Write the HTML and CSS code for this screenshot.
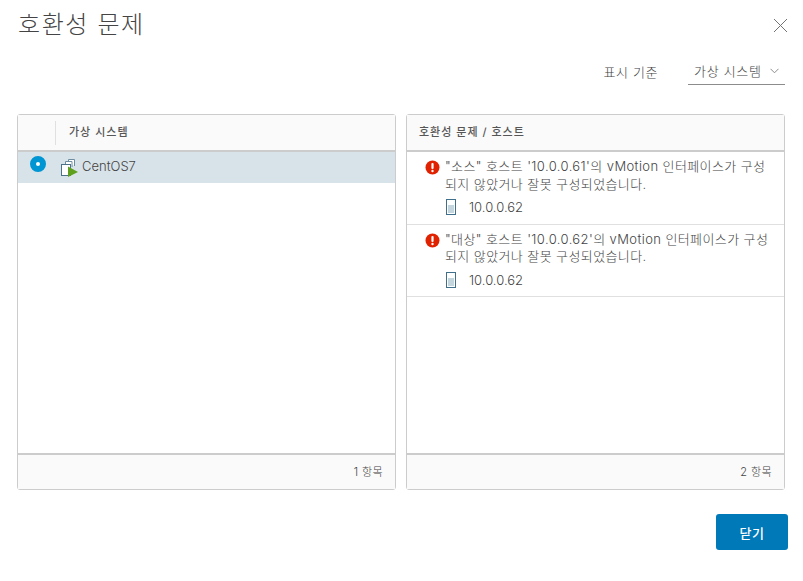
FILE: index.html
```html
<!DOCTYPE html>
<html lang="ko">
<head>
    <meta charset="UTF-8">
    <title>호환성 문제</title>
    <link rel="stylesheet" href="styles.css">
</head>
<body>
    <div class="modal">
        <div class="modal-header">
            <h1>호환성 문제</h1>
            <button class="close-button" aria-label="닫기">
                <svg width="15" height="15" viewBox="0 0 15 15"><path d="M1 1 L14 14 M14 1 L1 14" stroke="#737373" stroke-width="1" fill="none"/></svg>
            </button>
        </div>
        <div class="view-by">
            <span class="view-label">표시 기준</span>
            <div class="view-select">
                <span>가상 시스템</span>
                <svg width="9" height="6" viewBox="0 0 9 6"><path d="M0.5 0.8 L4.5 4.8 L8.5 0.8" stroke="#8c8c8c" stroke-width="1" fill="none"/></svg>
            </div>
        </div>
        <div class="panels">
            <div class="panel">
                <div class="panel-head">
                    <div class="radio-col"></div>
                    <div class="head-title with-divider">가상 시스템</div>
                </div>
                <div class="panel-body">
                    <div class="vm-row">
                        <span class="radio"></span>
                        <svg class="vm-icon" width="18" height="18" viewBox="0 0 18 18">
                            <path d="M7.5 3.5 V0.5 H13.5 V7" stroke="#6f8da0" fill="#fff"/>
                            <path d="M4.5 5.5 V2.5 H11 V8" stroke="#6f8da0" fill="#fff"/>
                            <rect x="0.5" y="5.5" width="9" height="11" fill="#fff" stroke="#4d7288"/>
                            <path d="M7 7.5 L17 13 L7 18 Z" fill="#5ea01e"/>
                        </svg>
                        <span class="vm-name">CentOS7</span>
                    </div>
                </div>
                <div class="panel-foot">1 항목</div>
            </div>
            <div class="panel">
                <div class="panel-head">
                    <div class="head-title">호환성 문제 / 호스트</div>
                </div>
                <div class="panel-body">
                    <div class="issue">
                        <div class="issue-text">
                            <svg class="error-icon" width="15" height="15" viewBox="0 0 15 15"><circle cx="7.5" cy="7.5" r="7" fill="#e12200"/><rect x="6.4" y="3" width="2.2" height="6" rx="1" fill="#fff"/><circle cx="7.5" cy="11" r="1.2" fill="#fff"/></svg>
                            <p>"소스" 호스트 '10.0.0.61'의 vMotion 인터페이스가 구성되지 않았거나 잘못 구성되었습니다.</p>
                        </div>
                        <div class="host">
                            <svg width="10" height="16" viewBox="0 0 10 16"><rect x="0.5" y="0.5" width="9" height="15" fill="#fff" stroke="#3f6f8a"/><rect x="2" y="6" width="6" height="8" fill="#c5d5de"/></svg>
                            <span>10.0.0.62</span>
                        </div>
                    </div>
                    <div class="issue">
                        <div class="issue-text">
                            <svg class="error-icon" width="15" height="15" viewBox="0 0 15 15"><circle cx="7.5" cy="7.5" r="7" fill="#e12200"/><rect x="6.4" y="3" width="2.2" height="6" rx="1" fill="#fff"/><circle cx="7.5" cy="11" r="1.2" fill="#fff"/></svg>
                            <p>"대상" 호스트 '10.0.0.62'의 vMotion 인터페이스가 구성되지 않았거나 잘못 구성되었습니다.</p>
                        </div>
                        <div class="host">
                            <svg width="10" height="16" viewBox="0 0 10 16"><rect x="0.5" y="0.5" width="9" height="15" fill="#fff" stroke="#3f6f8a"/><rect x="2" y="6" width="6" height="8" fill="#c5d5de"/></svg>
                            <span>10.0.0.62</span>
                        </div>
                    </div>
                </div>
                <div class="panel-foot">2 항목</div>
            </div>
        </div>
        <div class="modal-foot">
            <button class="close-action">닫기</button>
        </div>
    </div>
</body>
</html>
```

FILE: styles.css
```css
* {
    box-sizing: border-box;
}
body {
    margin: 0;
    background-color: white;
    font-family: Inter, "Noto Sans CJK KR", sans-serif;
    color: #444;
}
.modal {
    width: 803px;
    height: 581px;
    padding: 4px 15px 0 18px;
}
.modal-header {
    display: flex;
    justify-content: space-between;
    align-items: center;
    height: 36px;
}
.modal-header h1 {
    margin: 0;
    font-size: 24px;
    font-weight: 300;
    letter-spacing: 1.6px;
    color: #444;
}
.close-button {
    border: none;
    background: none;
    padding: 0;
    margin-top: 7px;
    margin-right: 0;
    height: 15px;
}
.view-by {
    display: flex;
    justify-content: flex-end;
    align-items: center;
    gap: 30px;
    height: 28px;
    margin-top: 17px;
    margin-right: 3px;
    font-weight: 300;
}
.view-label {
    font-size: 13px;
    letter-spacing: 0.6px;
}
.view-select {
    display: flex;
    align-items: center;
    justify-content: space-between;
    width: 97px;
    height: 28px;
    padding: 0 6px;
    font-size: 13px;
    letter-spacing: 0.7px;
    border-bottom: 1px solid #8c8c8c;
}
.panels {
    display: flex;
    gap: 10px;
    margin-top: 29px;
    margin-right: 3px;
    margin-left: -1px;
}
.panel {
    flex: 1;
    height: 376px;
    display: flex;
    flex-direction: column;
    border: 1px solid #ccc;
    border-radius: 3px;
}
.panel-head {
    display: flex;
    align-items: center;
    height: 37px;
    padding-bottom: 3px;
    background: #fafafa;
    border-bottom: 2px solid #ccc;
    font-size: 11px;
    font-weight: 500;
    letter-spacing: 1px;
    color: #565656;
}
.radio-col {
    width: 37px;
}
.head-title {
    padding-left: 12px;
}
.head-title.with-divider {
    border-left: 1px solid #e0e0e0;
    height: 24px;
    line-height: 22px;
    margin-top: 3px;
    padding-left: 13px;
}
.panel-body {
    flex: 1;
}
.panel-foot {
    height: 36px;
    line-height: 34px;
    padding-right: 12px;
    text-align: right;
    font-size: 11px;
    font-weight: 300;
    letter-spacing: 0.4px;
    background: #fafafa;
    border-top: 2px solid #ccc;
}
.vm-row {
    display: flex;
    align-items: center;
    height: 31px;
    background: #d8e3e9;
    padding-left: 12px;
}
.radio {
    width: 16px;
    height: 16px;
    border-radius: 50%;
    border: 6px solid #0095d3;
    background: #fff;
    margin-top: -8px;
}
.vm-icon {
    margin-left: 15px;
}
.vm-name {
    margin-left: 3px;
    font-size: 13px;
    font-weight: 300;
    margin-top: -4px;
}
.issue {
    padding: 6px 12px 0 18px;
    height: 72.5px;
    border-bottom: 1px solid #e0e0e0;
}
.issue-text {
    display: flex;
    align-items: flex-start;
    gap: 5px;
}
.error-icon {
    flex: none;
    margin-top: 2px;
}
.issue-text p {
    margin: 0;
    font-size: 13px;
    font-weight: 300;
    line-height: 17.5px;
    letter-spacing: 0.4px;
    word-break: break-all;
}
.host {
    display: flex;
    align-items: center;
    gap: 13px;
    margin-top: 6px;
    padding-left: 21px;
    font-size: 13px;
    font-weight: 300;
}
.modal-foot {
    display: flex;
    justify-content: flex-end;
    margin-top: 24px;
}
.close-action {
    width: 72px;
    height: 36px;
    border: none;
    border-radius: 3px;
    background-color: #0079b8;
    color: white;
    font-family: inherit;
    font-size: 13px;
    font-weight: 500;
    letter-spacing: 0.5px;
}
```
